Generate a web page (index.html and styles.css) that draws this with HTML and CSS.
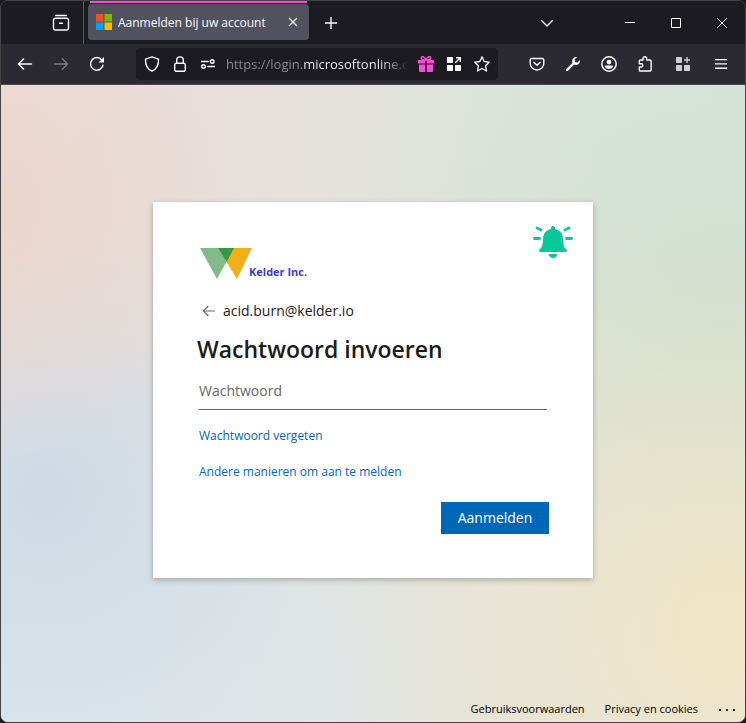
FILE: index.html
```html
<!DOCTYPE html>
<html lang="nl">
<head>
<meta charset="utf-8">
<meta name="viewport" content="width=device-width, initial-scale=1">
<title>Aanmelden bij uw account</title>
<link rel="stylesheet" href="styles.css">
</head>
<body>
<div class="window">
  <header class="tabbar">
    <button class="tool recent" aria-label="Recent">
      <svg width="18" height="18" viewBox="0 0 18 18" fill="none" stroke="currentColor" stroke-width="1.4" stroke-linecap="round"><path d="M3.500 1.500h11"/><rect x="1.500" y="4.200" width="15" height="11.800" rx="2"/><path d="M7.500 9.200h3"/></svg>
    </button>
    <div class="tab">
      <div class="tab-body">
        <svg width="16" height="16" viewBox="0 0 16 16"><path fill="#f25022" d="M0 0h7.500v7.500H0z"/><path fill="#7fba00" d="M8.500 0H16v7.500H8.500z"/><path fill="#00a4ef" d="M0 8.500h7.500V16H0z"/><path fill="#ffb900" d="M8.500 8.500H16V16H8.500z"/></svg>
        <span class="tab-title">Aanmelden bij uw account</span>
        <button class="tab-close" aria-label="Tabblad sluiten">
          <svg width="10" height="10" viewBox="0 0 10 10" stroke="currentColor" stroke-width="1.100"><path d="M1 1l8 8M9 1L1 9"/></svg>
        </button>
      </div>
    </div>
    <button class="tool newtab" aria-label="Nieuw tabblad">
      <svg width="14" height="14" viewBox="0 0 14 14" stroke="currentColor" stroke-width="1.400"><path d="M7 1v12M1 7h12"/></svg>
    </button>
    <button class="tool alltabs" aria-label="Alle tabbladen">
      <svg width="14" height="14" viewBox="0 0 14 14" fill="none" stroke="currentColor" stroke-width="1.400" stroke-linecap="round" stroke-linejoin="round"><path d="M1.500 4.500L7 10l5.500-5.500"/></svg>
    </button>
    <div class="controls">
      <button class="control" aria-label="Minimaliseren"><svg width="10" height="10" viewBox="0 0 10 10"><path fill="currentColor" d="M0 4h10v1H0z"/></svg></button>
      <button class="control" aria-label="Maximaliseren"><svg width="10" height="10" viewBox="0 0 10 10" fill="none" stroke="currentColor"><path d="M.5.5h9v9h-9z"/></svg></button>
      <button class="control" aria-label="Sluiten"><svg width="10" height="10" viewBox="0 0 10 10" stroke="currentColor"><path d="M0 0l10 10M10 0L0 10"/></svg></button>
    </div>
  </header>

  <nav class="toolbar" aria-label="Navigatie">
    <div class="group">
      <button class="tool" aria-label="Terug"><svg width="16" height="16" viewBox="0 0 16 16" fill="none" stroke="currentColor" stroke-width="1.500" stroke-linecap="round" stroke-linejoin="round"><path d="M14.500 8H1.500M6.500 3l-5 5 5 5"/></svg></button>
      <button class="tool dim" aria-label="Vooruit"><svg width="16" height="16" viewBox="0 0 16 16" fill="none" stroke="currentColor" stroke-width="1.500" stroke-linecap="round" stroke-linejoin="round"><path d="M1.500 8h13M9.500 3l5 5-5 5"/></svg></button>
      <button class="tool" aria-label="Vernieuwen"><svg width="16" height="16" viewBox="0 0 16 16" fill="none" stroke="currentColor" stroke-width="1.500" stroke-linecap="round"><path d="M14 9.200A6.300 6.300 0 1 1 12.800 4"/><path fill="currentColor" stroke="none" d="M15 1v5.200a.4.400 0 0 1-.4.400H9.500z"/></svg></button>
    </div>
    <div class="urlbar">
      <button class="field-icon" aria-label="Bescherming"><svg width="16" height="16" viewBox="0 0 16 16" fill="none" stroke="currentColor" stroke-width="1.400" stroke-linejoin="round"><path d="M8 .9l6.500 2.300c.2 4.900-1.500 9.800-6.500 12C3 13 1.300 8.100 1.500 3.200z"/></svg></button>
      <button class="field-icon" aria-label="Beveiligde verbinding"><svg width="16" height="16" viewBox="0 0 16 16" fill="none" stroke="currentColor" stroke-width="1.400"><rect x="2.700" y="7.200" width="10.600" height="8" rx="1.500"/><path d="M4.700 7V4.200a3.300 3.300 0 0 1 6.600 0V7"/></svg></button>
      <button class="field-icon" aria-label="Machtigingen"><svg width="16" height="16" viewBox="0 0 16 16" fill="none" stroke="currentColor" stroke-width="1.400" stroke-linecap="round"><path d="M1.500 5.500h7M7.500 10.500h7"/><circle cx="12.200" cy="5.500" r="1.800"/><circle cx="3.400" cy="10.500" r="1.800"/></svg></button>
      <input class="url" type="text" aria-label="Adres" value="https://login.microsoftonline.com/" spellcheck="false">
      <button class="field-icon pink" aria-label="Cadeau"><svg width="16" height="16" viewBox="0 0 16 16" fill="currentColor"><path d="M0 4h7.200v3.400H0zM8.800 4H16v3.400H8.800zM1 8.600h6.200V16H2a1 1 0 0 1-1-1zM8.800 8.600H15V15a1 1 0 0 1-1 1H8.800z"/><path fill="none" stroke="currentColor" stroke-width="1.500" d="M8 3.800C6.500 4.200 3.200 4 3.300 2 3.500 0 6.500-.1 8 3.800zM8 3.800c1.500.4 4.800.2 4.700-1.800C12.500 0 9.500-.1 8 3.800z"/></svg></button>
      <button class="field-icon" aria-label="App openen"><svg width="16" height="16" viewBox="0 0 16 16" fill="currentColor"><rect x="1" y="1" width="6" height="6" rx=".8"/><rect x="1" y="9" width="6" height="6" rx=".8"/><rect x="9" y="9" width="6" height="6" rx=".8"/><path fill="none" stroke="currentColor" stroke-width="1.400" d="M10 1.700h4.300V6M14 2L9.300 6.700"/></svg></button>
      <button class="field-icon" aria-label="Bladwijzer"><svg width="16" height="16" viewBox="0 0 16 16" fill="none" stroke="currentColor" stroke-width="1.300" stroke-linejoin="round"><path d="M8 .9l2.200 4.600 5 .7-3.600 3.600.9 5.200L8 12.500 3.500 15l.9-5.200L.8 6.200l5-.7z"/></svg></button>
    </div>
    <div class="group">
      <button class="tool" aria-label="Pocket"><svg width="16" height="16" viewBox="0 0 16 16" fill="none" stroke="currentColor" stroke-width="1.400" stroke-linecap="round" stroke-linejoin="round"><path d="M2.700 2.500h10.600a1.500 1.500 0 0 1 1.500 1.500v3.500a6.800 6.500 0 0 1-13.600 0V4a1.500 1.500 0 0 1 1.500-1.500z"/><path d="M5 6.500l3 2.800 3-2.800"/></svg></button>
      <button class="tool" aria-label="Ontwikkelaar"><svg width="16" height="16" viewBox="0 0 16 16"><path fill="none" stroke="currentColor" stroke-width="2.300" stroke-linecap="round" d="M2.200 13.900L8.500 7.500"/><path fill="currentColor" d="M12.300 1.100a4.200 4.200 0 0 0-5 5.200c.3 1.200 1.200 2.200 2.500 2.500 2.900.8 5.700-1.600 5.100-4.700l-2.500 2.300-2.400-.4-.4-2.400z"/></svg></button>
      <button class="tool" aria-label="Account"><svg width="16" height="16" viewBox="0 0 16 16"><circle cx="8" cy="8" r="7.200" fill="none" stroke="currentColor" stroke-width="1.500"/><circle cx="8" cy="6.100" r="2.400" fill="currentColor"/><path fill="currentColor" d="M4.800 9.500h6.400c1 0 1.300.7.9 1.400a5 5 0 0 1-8.200 0c-.4-.7-.1-1.400.9-1.400z"/></svg></button>
      <button class="tool" aria-label="Extensies"><svg width="16" height="16" viewBox="0 0 16 16" fill="none" stroke="currentColor" stroke-width="1.400" stroke-linejoin="round"><path d="M6 4V2.600a1.800 1.800 0 0 1 3.600 0V4h3.500a1 1 0 0 1 1 1v9a1 1 0 0 1-1 1H3.300a1 1 0 0 1-1-1v-3h1.900a1.600 1.600 0 0 0 0-3.200H2.300V5a1 1 0 0 1 1-1z"/></svg></button>
      <button class="tool soft spaced" aria-label="Apps"><svg width="16" height="16" viewBox="0 0 16 16" fill="currentColor"><rect x="1" y="1" width="6" height="6" rx=".8"/><rect x="1" y="9" width="6" height="6" rx=".8"/><rect x="9" y="9" width="6" height="6" rx=".8"/><path d="M11.300 1h1.400v2.300H15v1.400h-2.300V7h-1.400V4.700H9V3.300h2.300z"/></svg></button>
      <button class="tool spaced" aria-label="Menu"><svg width="16" height="16" viewBox="0 0 16 16" fill="currentColor"><path d="M2 3h12v1.300H2zM2 7.300h12v1.300H2zM2 11.600h12v1.300H2z"/></svg></button>
    </div>
  </nav>

  <div class="page">
    <main class="stage">
      <form class="card">
        <svg class="bell" width="40" height="32" viewBox="0 0 40 32" fill="#07c898"><path d="M20 0a2 2 0 0 1 2 2v1c5 1 8 5 8 10 0 6 1 8 3.400 10.700C34.700 25.200 34 26 32.700 26H7.300C6 26 5.300 25.200 6.600 23.700 9 21 10 19 10 13c0-5 3-9 8-10V2a2 2 0 0 1 2-2zM16 28h8a4 4 0 0 1-8 0z"/><path fill="none" stroke="#07c898" stroke-width="2.800" stroke-linecap="round" d="M1.500 12.500h5M33.500 12.500h5M4 2l4 2M36 2l-4 2"/></svg>
        <div class="brand">
          <svg width="52" height="31" viewBox="0 0 52 31"><path fill="#80bb89" d="M0 0h34L17 31z"/><path fill="#f1af1b" d="M18 0h34L37 31z"/><path fill="#309a48" d="M18 0h16l-7.200 13.800z"/></svg>
          <span class="brand-name">Kelder Inc.</span>
        </div>
        <div class="identity">
          <button class="back" type="button" aria-label="Terug"><svg width="14" height="12" viewBox="0 0 14 12" fill="none" stroke="#666" stroke-width="1.100"><path d="M13 6H1.500M6.300 1l-5 5 5 5"/></svg></button>
          <span>acid.burn@kelder.io</span>
        </div>
        <h1 class="title">Wachtwoord invoeren</h1>
        <input class="password" type="password" placeholder="Wachtwoord" aria-label="Wachtwoord">
        <a class="link" href="#vergeten">Wachtwoord vergeten</a>
        <a class="link" href="#anders">Andere manieren om aan te melden</a>
        <button class="submit" type="submit">Aanmelden</button>
      </form>
    </main>
    <footer class="footer">
      <a href="#voorwaarden">Gebruiksvoorwaarden</a>
      <a href="#privacy">Privacy en cookies</a>
      <button class="more" aria-label="Meer"><svg width="18" height="8" viewBox="0 0 18 8"><circle cx="2" cy="6" r="1.100"/><circle cx="9" cy="6" r="1.100"/><circle cx="16" cy="6" r="1.100"/></svg></button>
    </footer>
  </div>
</div>
</body>
</html>
```

FILE: styles.css
```css
* {
  box-sizing: border-box;
}

body {
  margin: 0;
  background: #1b1b1d;
  font-family: "Open Sans", "Noto Sans", sans-serif;
  color: #1b1b1b;
}

button {
  display: flex;
  align-items: center;
  justify-content: center;
  padding: 0;
  border: 0;
  background: none;
  color: inherit;
  font: inherit;
}

input {
  font: inherit;
  outline: 0;
}

svg {
  display: block;
  flex: none;
}

a {
  text-decoration: none;
}

.window {
  display: flex;
  flex-direction: column;
  min-height: 100vh;
  border: 1px solid #444446;
  border-radius: 8px;
  overflow: hidden;
}

/* Tab strip */
.tabbar {
  display: flex;
  height: 43px;
  background: #1c1b22;
  color: #fbfbfe;
}

.tool {
  width: 36px;
  height: 100%;
}

.recent {
  width: 83px;
  padding-left: 37px;
  border-right: 1px solid #5b5b66;
}

.tab {
  flex: 0 1 221px;
  min-width: 0;
  margin: 0 4px;
}

.tab::before {
  content: "";
  display: block;
  height: 2px;
  margin: 0 2px 1px;
  background: #ff4bda;
}

.tab-body {
  display: flex;
  align-items: center;
  gap: 6px;
  height: 36px;
  padding: 0 6px 0 8px;
  border-radius: 4px;
  background: #52525e;
  font-size: 12px;
}

.tab-title {
  flex: 1;
  min-width: 0;
  overflow: hidden;
  white-space: nowrap;
}

.tab-close {
  width: 20px;
  height: 20px;
}

.alltabs {
  margin-left: auto;
}

.controls {
  display: flex;
  margin-left: 42px;
}

.control {
  width: 46px;
}

/* Navigation toolbar */
.toolbar {
  display: flex;
  align-items: center;
  gap: 21px;
  height: 41px;
  padding: 0 6px;
  border-bottom: 1px solid #4a4953;
  background: #2b2a33;
  color: #fbfbfe;
}

.group {
  display: flex;
  height: 100%;
}

.dim {
  color: #7c7b83;
}

.soft {
  color: #d0d0d4;
}

.spaced {
  margin-left: 2px;
}

.urlbar {
  display: flex;
  flex: 1;
  align-items: center;
  min-width: 0;
  height: 32px;
  padding: 0 2px;
  border-radius: 4px;
  background: #1c1b22;
}

.field-icon {
  flex: none;
  width: 28px;
  height: 28px;
}

.pink {
  color: #ff4bda;
}

.url {
  flex: 1;
  min-width: 0;
  height: 28px;
  margin: 0 4px;
  padding: 0;
  border: 0;
  background: linear-gradient(90deg, #8d8d94 0 78px, #fbfbfe 78px calc(100% - 30px), #8d8d94 calc(100% - 14px), transparent);
  background-clip: text;
  color: transparent;
  font-size: 13px;
}

/* Sign-in page */
.page {
  display: flex;
  flex: 1;
  flex-direction: column;
  background:
    radial-gradient(circle at 0% 19%, #ead5cc, #ead5cc00 28%),
    radial-gradient(circle at 97% 85%, #f0e5c6, #f0e5c600 42%),
    radial-gradient(circle at 97% 38%, #d2dfcf, #d2dfcf00 42%),
    radial-gradient(circle at 6% 64%, #cfdae5, #cfdae500 34%),
    radial-gradient(circle at 0% 0%, #ecdcda, #ecdcda00 52%),
    radial-gradient(circle at 0% 100%, #dae5ef, #dae5ef00 50%),
    radial-gradient(circle at 100% 0%, #d6e4d9, #d6e4d900 50%),
    #e2e4df;
}

.stage {
  display: flex;
  flex: 1;
  align-items: center;
  justify-content: center;
}

.card {
  position: relative;
  display: flex;
  flex-direction: column;
  align-items: flex-start;
  width: 100%;
  max-width: 440px;
  padding: 46px 44px 44px;
  background: #fff;
  box-shadow: 0 2px 6px rgba(0, 0, 0, 0.25);
}

.bell {
  position: absolute;
  top: 24px;
  right: 20px;
}

.brand {
  display: flex;
  align-items: flex-end;
  height: 32px;
  margin-left: 3px;
}

.brand svg {
  align-self: flex-start;
}

.brand-name {
  margin-left: -3px;
  color: #3a3fc4;
  font-size: 11px;
  font-weight: 700;
  line-height: 16px;
}

.identity {
  display: flex;
  align-items: center;
  gap: 7px;
  height: 24px;
  margin: 19px 0 10px 5px;
  font-size: 14px;
}

.title {
  margin: 0 0 10px;
  font-size: 23px;
  font-weight: 600;
  line-height: 32px;
}

.password {
  align-self: stretch;
  height: 35px;
  margin: 0 2px;
  padding: 0 0 2px;
  border: 0;
  border-bottom: 1px solid #666;
  background: none;
  font-size: 14px;
}

.password::placeholder {
  color: #666;
  opacity: 1;
}

.link {
  margin: 16px 2px 0;
  color: #0067b8;
  font-size: 12px;
  line-height: 20px;
}

.submit {
  align-self: flex-end;
  width: 108px;
  height: 32px;
  margin-top: 20px;
  background: #0067b8;
  color: #fff;
  font-size: 14px;
}

.footer {
  display: flex;
  align-items: center;
  justify-content: flex-end;
  gap: 20px;
  height: 28px;
  padding-right: 9px;
  font-size: 11px;
}

.footer a {
  color: #000;
}
```
